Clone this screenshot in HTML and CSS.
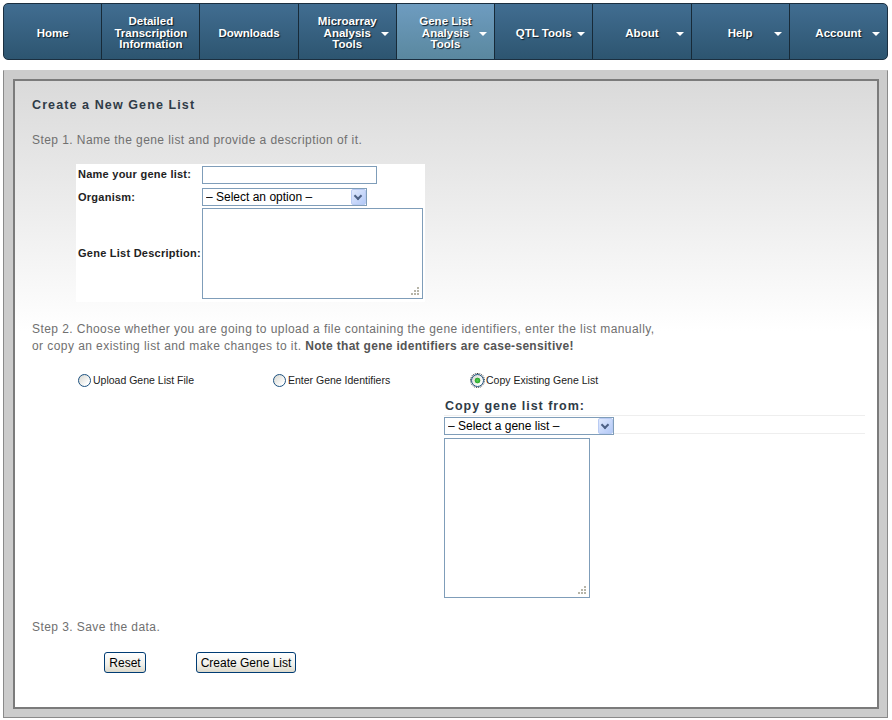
FILE: index.html
```html
<!DOCTYPE html>
<html>
<head>
<meta charset="utf-8">
<title>Create a New Gene List</title>
<link rel="stylesheet" href="styles.css">
</head>
<body>
<div class="page">
  <nav class="nav">
    <div class="nav-item"><span>Home</span></div>
    <div class="nav-item"><span>Detailed<br>Transcription<br>Information</span></div>
    <div class="nav-item"><span>Downloads</span></div>
    <div class="nav-item drop"><span>Microarray<br>Analysis<br>Tools</span><i class="caret"></i></div>
    <div class="nav-item drop active"><span>Gene List<br>Analysis<br>Tools</span><i class="caret"></i></div>
    <div class="nav-item drop"><span>QTL Tools</span><i class="caret"></i></div>
    <div class="nav-item drop"><span>About</span><i class="caret"></i></div>
    <div class="nav-item drop"><span>Help</span><i class="caret"></i></div>
    <div class="nav-item drop"><span>Account</span><i class="caret"></i></div>
  </nav>

  <div class="outer">
    <div class="inner">
      <h1 class="title">Create a New Gene List</h1>
      <p class="step step1">Step 1. Name the gene list and provide a description of it.</p>

      <div class="form-grid">
        <label class="lbl lbl-name">Name your gene list:</label>
        <input class="txt" type="text">
        <label class="lbl lbl-org">Organism:</label>
        <div class="sel sel-org"><select><option>&ndash; Select an option &ndash;</option></select></div>
        <label class="lbl lbl-desc">Gene List Description:</label>
        <div class="ta-wrap ta-desc"><textarea></textarea></div>
      </div>

      <p class="step step2">Step 2. Choose whether you are going to upload a file containing the gene identifiers, enter the list manually,<br>or copy an existing list and make changes to it. <b>Note that gene identifiers are case-sensitive!</b></p>

      <div class="options">
        <label class="opt opt1"><input type="radio" name="src">Upload Gene List File</label>
        <label class="opt opt2"><input type="radio" name="src">Enter Gene Identifiers</label>
        <label class="opt opt3"><input type="radio" name="src" class="focus" checked>Copy Existing Gene List</label>
      </div>

      <div class="copy-box">
        <div class="copy-head">Copy gene list from:</div>
        <div class="copy-row"><div class="sel sel-list"><select><option>&ndash; Select a gene list &ndash;</option></select></div></div>
        <div class="ta-wrap ta-list"><textarea></textarea></div>
      </div>

      <p class="step step3">Step 3. Save the data.</p>

      <div class="buttons">
        <button class="btn btn-reset" type="button">Reset</button>
        <button class="btn btn-create" type="button">Create Gene List</button>
      </div>
    </div>
  </div>
</div>
</body>
</html>
```

FILE: styles.css
```css
* { box-sizing: border-box; }

body {
  margin: 0;
  background: #fff;
  font-family: "Liberation Sans", Arial, sans-serif;
}

.page {
  padding: 3px 4px 3px 3px;
}

/* ---------- navigation ---------- */
.nav {
  display: flex;
  height: 57px;
  border: 1px solid #1b2f40;
  border-radius: 5px;
  overflow: hidden;
  background: linear-gradient(#416d91, #2d5570);
}

.nav-item {
  position: relative;
  flex: 1 1 0;
  display: flex;
  align-items: center;
  justify-content: center;
  text-align: center;
  padding-top: 4px;
  color: #fff;
  font-weight: bold;
  font-size: 11.5px;
  line-height: 11.7px;
  text-shadow: 1px 1px 1px #0d1d29;
  border-left: 1px solid #172a38;
}

.nav-item:first-child { border-left: none; }

.nav-item.active {
  background: linear-gradient(#6e9cc0, #5a889f);
}

.caret {
  position: absolute;
  right: 7px;
  top: 28px;
  width: 0;
  height: 0;
  border-left: 4px solid transparent;
  border-right: 4px solid transparent;
  border-top: 4px solid #fff;
}

/* ---------- containers ---------- */
.outer {
  margin-top: 10px;
  background: #cccccc;
  border: 1px solid #8a8a8a;
  border-top-color: #cccccc;
  padding: 8px 8px 8px 9px;
}

.inner {
  border: 2px solid #7b7b7b;
  background: linear-gradient(#dadada, #ffffff 250px);
  padding: 16px 12px 34px 17px;
}

.title {
  margin: 0;
  font-size: 12.5px;
  line-height: 16px;
  letter-spacing: 1.1px;
  font-weight: bold;
  color: #2f3b47;
}

.step {
  margin: 0;
  font-size: 12px;
  line-height: 17px;
  color: #707070;
  letter-spacing: 0.43px;
}

.step b { color: #555; letter-spacing: 0.3px; }

.step1 { margin-top: 19px; }

/* ---------- step 1 form ---------- */
.form-grid {
  display: grid;
  grid-template-columns: 124px 221px;
  width: 349px;
  margin: 15px 0 0 44px;
  padding: 2px 2px 3px;
  background: #fff;
}

.lbl {
  font-size: 11px;
  font-weight: bold;
  color: #222;
  align-self: center;
  white-space: nowrap;
  letter-spacing: 0.25px;
}

.lbl-name { margin-top: -3px; }
.lbl-org { margin-top: 3px; }

.txt {
  width: 175px;
  height: 18px;
  border: 1px solid #7f9db9;
  background: #fff;
  padding: 0 2px;
  font-size: 12px;
  margin: 0;
}

.sel {
  position: relative;
  display: inline-block;
  justify-self: start;
}

.sel select {
  -webkit-appearance: none;
  appearance: none;
  height: 18px;
  border: 1px solid #7f9db9;
  border-radius: 0;
  background: #fff;
  font-family: "Liberation Sans", Arial, sans-serif;
  font-size: 12px;
  color: #000;
  padding: 0 0 0 3px;
  margin: 0;
  display: block;
}

.sel::before {
  content: "";
  position: absolute;
  top: 1px;
  right: 1px;
  width: 15px;
  height: 16px;
  border-radius: 2px;
  background: linear-gradient(135deg, #e0e9fd, #b3c9f7);
  border: 1px solid #b9cbf3;
  box-sizing: border-box;
}

.sel::after {
  content: "";
  position: absolute;
  top: 5px;
  right: 6px;
  width: 4px;
  height: 4px;
  border-right: 2px solid #4d6185;
  border-bottom: 2px solid #4d6185;
  transform: rotate(45deg);
}

.sel-org { margin-top: 4px; }
.sel-org select { width: 165px; }

.ta-wrap {
  position: relative;
  display: block;
  width: fit-content;
}

.ta-wrap textarea {
  display: block;
  margin: 0;
  border: 1px solid #7f9db9;
  background: #fff;
  resize: none;
  font-size: 12px;
}

.ta-wrap::after {
  content: "";
  position: absolute;
  right: 4px;
  bottom: 4px;
  width: 2px;
  height: 2px;
  background: #b7b5a8;
  box-shadow: -3px 0 #b7b5a8, -6px 0 #b7b5a8, 0 -3px #b7b5a8, -3px -3px #b7b5a8, 0 -6px #b7b5a8;
}

.ta-desc { margin-top: 2px; }
.ta-desc textarea { width: 221px; height: 91px; }

.step2 { margin-top: 19px; }

/* ---------- step 2 options ---------- */
.options {
  display: grid;
  grid-template-columns: 214px 198px 1fr;
  margin-top: 14px;
  height: 22px;
  align-items: center;
}

.opt {
  display: flex;
  align-items: center;
  font-size: 10.5px;
  color: #222;
  white-space: nowrap;
}

.opt1 { padding-left: 46px; }
.opt2 { padding-left: 27px; }
.opt3 { padding-left: 27px; }

.opt input {
  -webkit-appearance: none;
  appearance: none;
  width: 13px;
  height: 13px;
  margin: 0 2px 0 0;
  border: 1px solid #1c5180;
  border-radius: 50%;
  background: linear-gradient(135deg, #d6d6cf, #ffffff 80%);
  flex: none;
}

.opt input:checked {
  background:
    radial-gradient(circle at 50% 50%, #58d158 0, #2fa82f 2.5px, transparent 3.2px),
    linear-gradient(135deg, #d6d6cf, #ffffff 80%);
}

.opt input.focus {
  outline: 1px dotted #333;
  outline-offset: 0;
}

/* ---------- copy box ---------- */
.copy-box {
  margin-left: 412px;
  margin-top: 8px;
}

.copy-head {
  font-size: 12.5px;
  font-weight: bold;
  letter-spacing: 0.95px;
  color: #2f3b47;
  line-height: 15px;
  padding-left: 1px;
  border-bottom: 1px solid #eeeeee;
  height: 17px;
}

.copy-row {
  border-bottom: 1px solid #eeeeee;
  height: 18px;
}

.sel-list select { width: 170px; }

.ta-list { margin-top: 4px; }
.ta-list textarea { width: 146px; height: 160px; }

.step3 { margin-top: 21px; }

/* ---------- buttons ---------- */
.buttons {
  display: flex;
  gap: 50px;
  margin: 16px 0 0 72px;
}

.btn {
  height: 21px;
  border: 1px solid #003c74;
  border-radius: 3px;
  background: linear-gradient(#ffffff, #f1f0ea 60%, #dcd9cb);
  font-family: "Liberation Sans", Arial, sans-serif;
  font-size: 12px;
  color: #000;
  padding: 0;
  margin: 0;
  white-space: nowrap;
}

.btn-reset { width: 42px; }
.btn-create { width: 100px; }
```
